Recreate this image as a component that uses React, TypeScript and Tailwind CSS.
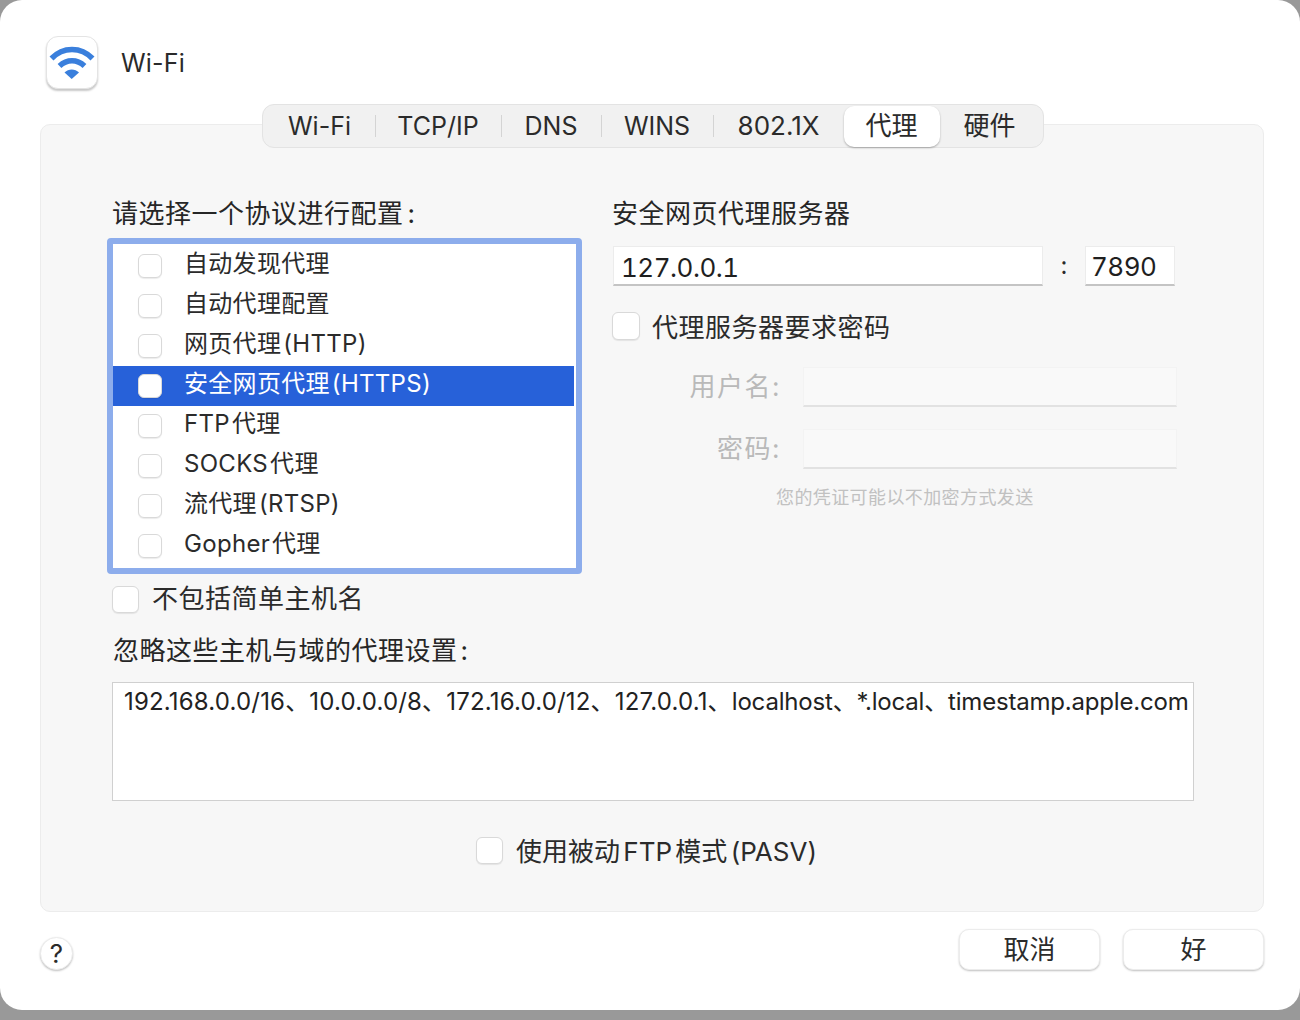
import React from 'react';

const FONT = "font-['Inter','Noto_Sans_CJK_SC',sans-serif]";

const tabs = ['Wi-Fi', 'TCP/IP', 'DNS', 'WINS', '802.1X', '代理', '硬件'];
const tabWidths = ['w-[110px]', 'w-[125px]', 'w-[99px]', 'w-[111px]', 'w-[130px]', 'w-[96px]', 'w-[100px]'];

const protocols = [
  '自动发现代理',
  '自动代理配置',
  '网页代理 (HTTP)',
  '安全网页代理 (HTTPS)',
  'FTP 代理',
  'SOCKS 代理',
  '流代理 (RTSP)',
  'Gopher 代理',
];

const Check = ({ className = '' }: { className?: string }) => (
  <div className={`h-[27px] w-[27px] shrink-0 rounded-[6px] border border-[#d9d9d9] bg-white shadow-[0_1px_1px_rgba(0,0,0,0.08)] ${className}`} />
);

const Field = ({ className = '', children }: { className?: string; children?: React.ReactNode }) => (
  <div className={`flex items-center border-t border-x border-[#ececec] border-b-2 border-b-[#c4c4c4] bg-white text-[#1f1f1f] ${className}`}>
    {children}
  </div>
);

const App = () => {
  return (
    <div className={`h-[1020px] w-[1300px] overflow-hidden bg-[#999999] ${FONT}`}>
      <div className="flex h-[1010px] flex-col rounded-[22px] bg-white pl-[40px] pr-[36px]">
        {/* header */}
        <div className="flex h-[104px] items-start pt-[36px]">
          <div className="ml-[6px] flex h-[53px] w-[52px] items-center justify-center rounded-[12px] border border-[#e4e4e4] bg-white shadow-[0_2px_2px_rgba(0,0,0,0.22)]">
            <svg width="46" height="36" viewBox="0 0 46 36" fill="none">
              <path d="M2.5 13.5C14 1.5 32 1.5 43.5 13.5" stroke="#3a7fdc" strokeWidth="5.5" />
              <path d="M10.5 21C18 14 28 14 35.5 21" stroke="#3a7fdc" strokeWidth="5.5" />
              <path d="M22.7 34L15.5 27.5C19.5 23.6 26 23.6 30 27.5L22.7 34Z" fill="#3a7fdc" />
            </svg>
          </div>
          <span className="ml-[23px] mt-[10px] text-[25px] leading-[34px] tracking-[0.2px] text-[#2a2a2a]">Wi-Fi</span>
        </div>

        {/* tabs overlap the top edge of the panel */}
        <div className="relative z-10 -mb-[24px] flex justify-center">
          <div className="ml-[1px] flex h-[44px] w-[782px] items-center rounded-[12px] border border-[#e3e3e3] bg-[#f1f1f1] pl-[2px]">
            {tabs.map((t, i) => (
              <React.Fragment key={t}>
                <div
                  className={`flex h-[41px] items-center justify-center leading-none text-[#2b2b2b] ${tabWidths[i]} ${
                    i < 4 ? 'text-[25px]' : 'text-[26px]'
                  } ${t === '代理' ? 'rounded-[10px] bg-white shadow-[0_1px_2px_rgba(0,0,0,0.3)]' : ''}`}
                >
                  {t}
                </div>
                {i < 4 && <div className="h-[22px] w-px bg-[#d4d4d4]" />}
              </React.Fragment>
            ))}
          </div>
        </div>

        {/* panel */}
        <div className="flex h-[788px] flex-col rounded-[10px] border border-[#ececec] bg-[#f7f7f7] pl-[66px] pr-[70px] pt-[71px]">
          <div className="flex">
            <div className="w-[505px] shrink-0">
              <div className="pl-[5px] text-[26px] leading-[36px] tracking-[0.5px] text-[#262626]">
                请选择一个协议进行配置<span className="ml-[4px]">:</span>
              </div>
              <div className="mt-[6px] h-[336px] w-[475px] rounded-[4px] border-[6px] border-[#8dadec] bg-white pr-[2px] pt-[2px]">
                {protocols.map((p, i) => (
                  <div
                    key={p}
                    className={`flex h-[40px] items-center pl-[25px] text-[24px] leading-none tracking-[0.3px] [word-spacing:-5px] ${
                      i === 3 ? 'bg-[#2761d9] text-white' : 'text-[#2b2b2b]'
                    }`}
                  >
                    <Check className="mr-[22px] !h-[24px] !w-[24px]" />
                    <span className="pb-[4px]">{p}</span>
                  </div>
                ))}
              </div>
              <div className="mt-[11px] flex items-center pl-[5px]">
                <Check className="mr-[13px]" />
                <span className="text-[26px] leading-[28px] tracking-[0.5px] text-[#2b2b2b]">不包括简单主机名</span>
              </div>
            </div>

            <div className="flex-1">
              <div className="text-[26px] leading-[36px] tracking-[0.5px] text-[#262626]">安全网页代理服务器</div>
              <div className="mt-[13px] flex items-center">
                <Field className="ml-[1px] h-[40px] w-[430px] pl-[7px] pt-[5px] text-[26px] tracking-[-0.5px] tabular-nums">127.0.0.1</Field>
                <span className="w-[42px] text-center text-[24px] leading-none text-[#2b2b2b]">:</span>
                <Field className="mt-[1px] h-[40px] w-[90px] pl-[5px] pt-[2px] text-[26px] tracking-[-0.5px] tabular-nums">7890</Field>
              </div>
              <div className="mt-[26px] flex items-center">
                <Check className="mr-[12px] !h-[28px] !w-[28px]" />
                <span className="h-[28px] text-[26px] leading-[31px] tracking-[0.5px] text-[#2b2b2b]">代理服务器要求密码</span>
              </div>
              <div className="mt-[27px] flex items-center">
                <span className="w-[169px] text-right text-[26px] leading-none tracking-[1.5px] text-[#b9b9b9]">用户名:</span>
                <Field className="ml-[22px] h-[40px] w-[374px] !border-[#f3f3f3] !border-b-[#e2e2e2] !bg-[#f9f9f9]" />
              </div>
              <div className="mt-[22px] flex items-center">
                <span className="w-[169px] text-right text-[26px] leading-none tracking-[1.5px] text-[#b9b9b9]">密码:</span>
                <Field className="ml-[22px] h-[40px] w-[374px] !border-[#f3f3f3] !border-b-[#e2e2e2] !bg-[#f9f9f9]" />
              </div>
              <div className="mt-[17px] pl-[164px] text-[18px] leading-[24px] tracking-[0.4px] text-[#c1c1c1]">您的凭证可能以不加密方式发送</div>
            </div>
          </div>

          <div className="mt-[20px] pl-[6px] text-[26px] leading-[36px] tracking-[0.5px] text-[#262626]">
            忽略这些主机与域的代理设置<span className="ml-[3px]">:</span>
          </div>
          <div className="ml-[5px] mt-[13px] h-[119px] w-[1082px] border border-[#d0d0d0] bg-white pl-[11px] pt-[3px] text-[24px] leading-[32px] whitespace-nowrap text-[#222222]">
            <span className="tracking-[0.18px]">192.168.0.0/16、10.0.0.0/8、172.16.0.0/12、127.0.0.1、</span>
            <span className="tracking-[-0.19px]">localhost、*.local、timestamp.apple.com</span>
          </div>
          <div className="ml-[369px] mt-[36px] flex items-center">
            <Check className="mr-[13px]" />
            <span className="h-[27px] text-[26px] leading-[29px] text-[#2b2b2b] [word-spacing:-4px]">使用被动 FTP 模式 (PASV)</span>
          </div>
        </div>

        {/* footer */}
        <div className="flex items-start justify-between pt-[17px]">
          <div className="mt-[8px] flex h-[33px] w-[33px] items-center justify-center rounded-full border border-[#ececec] bg-white text-[26px] leading-none text-[#2b2b2b] shadow-[0_1px_2px_rgba(0,0,0,0.25)]">?</div>
          <div className="flex gap-[23px]">
            {['取消', '好'].map((b) => (
              <div
                key={b}
                className="flex h-[41px] w-[141px] items-center justify-center rounded-[10px] border border-[#ececec] bg-white text-[26px] leading-none text-[#2b2b2b] shadow-[0_1px_2px_rgba(0,0,0,0.25)]"
              >
                {b}
              </div>
            ))}
          </div>
        </div>
      </div>
    </div>
  );
};

export default App;
